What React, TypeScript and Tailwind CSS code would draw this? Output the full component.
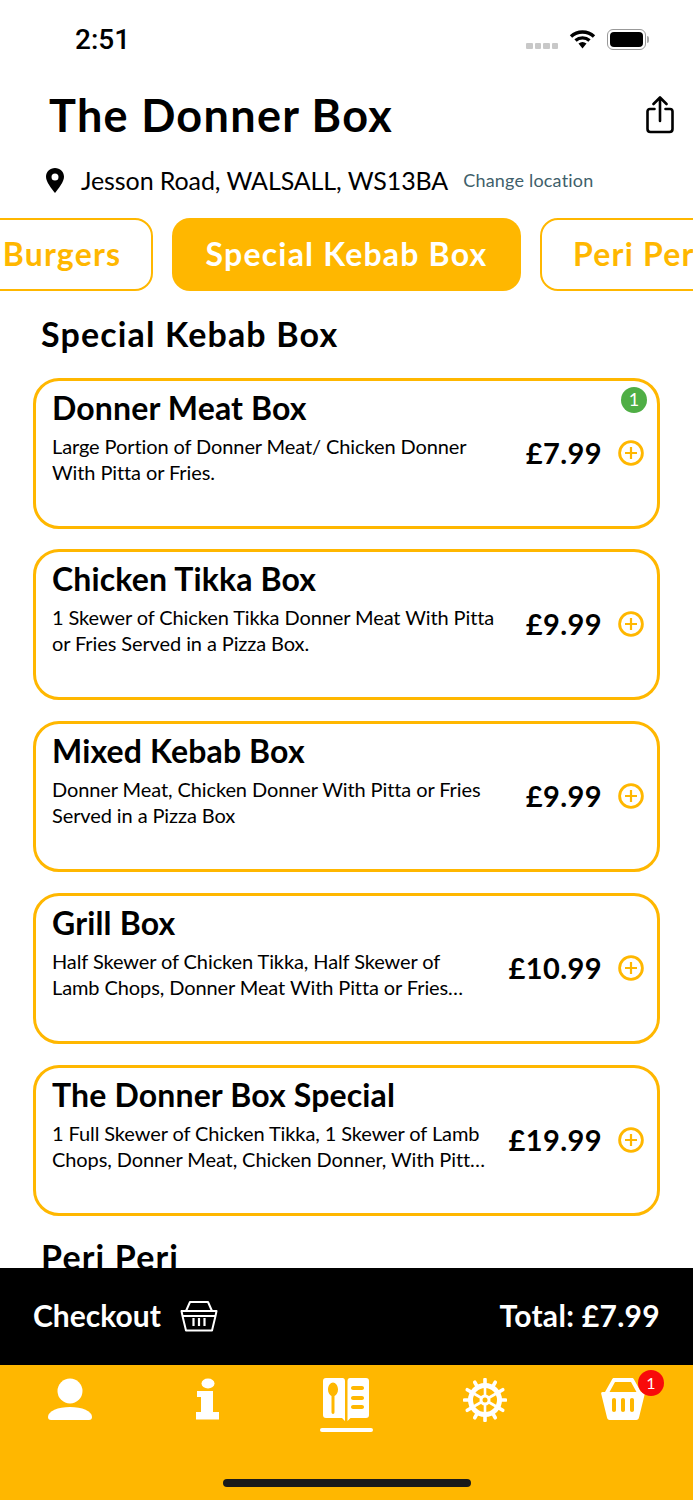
const font = { fontFamily: 'Lato, "Noto Sans", sans-serif' }

const items = [
  { name: 'Donner Meat Box', desc: 'Large Portion of Donner Meat/ Chicken Donner With Pitta or Fries.', price: '£7.99', count: 1 },
  { name: 'Chicken Tikka Box', desc: '1 Skewer of Chicken Tikka Donner Meat With Pitta or Fries Served in a Pizza Box.', price: '£9.99' },
  { name: 'Mixed Kebab Box', desc: 'Donner Meat, Chicken Donner With Pitta or Fries Served in a Pizza Box', price: '£9.99' },
  { name: 'Grill Box', desc: 'Half Skewer of Chicken Tikka, Half Skewer of Lamb Chops, Donner Meat With Pitta or Fries Served in a Pizza Box', price: '£10.99' },
  { name: 'The Donner Box Special', desc: '1 Full Skewer of Chicken Tikka, 1 Skewer of Lamb Chops, Donner Meat, Chicken Donner, With Pitta or Fries Served in a Pizza Box', price: '£19.99' },
]

function PlusIcon() {
  return (
    <svg width="26" height="26" viewBox="0 0 26 26" fill="none" stroke="#ffb700" strokeWidth="2.8">
      <circle cx="13" cy="13" r="11.4" />
      <path d="M13 7v12M7 13h12" strokeWidth="2.2" />
    </svg>
  )
}

function Basket({ outline }: { outline?: boolean }) {
  if (outline) {
    return (
      <svg width="38" height="32" viewBox="0 0 38 32" fill="none" stroke="white" strokeWidth="2" strokeLinejoin="round">
        <path d="M6 11 10 2h18l4 9" />
        <path d="M1.500 11h35l-1 5h-33zM2.500 16l3.500 14.500h26L35.500 16" />
        <path d="M13.500 18v8M19 18v8M24.500 18v8" strokeWidth="2.200" />
      </svg>
    )
  }
  return (
    <svg width="44" height="42" viewBox="0 0 44 42" fill="white">
      <path d="M4 14 11 1.500C11.500.5 12 0 13 0h18c1 0 1.500.5 2 1.500L40 14h-4.500L30 4H14L8.500 14z" />
      <path fillRule="evenodd" d="M1.500 14h41c1 0 1.500.8 1.300 1.800L38 39.500c-.3 1.500-1.200 2.500-2.700 2.500H8.700c-1.500 0-2.400-1-2.700-2.500L.200 15.800C0 14.800.5 14 1.500 14zM13 20c-1.300 0-2 .8-2 2v10c0 1.200.7 2 2 2s2-.8 2-2V22c0-1.200-.7-2-2-2zm9 0c-1.300 0-2 .8-2 2v10c0 1.200.7 2 2 2s2-.8 2-2V22c0-1.200-.7-2-2-2zm9 0c-1.300 0-2 .8-2 2v10c0 1.200.7 2 2 2s2-.8 2-2V22c0-1.200-.7-2-2-2z" />
    </svg>
  )
}

function Gear() {
  const teeth = Array.from({ length: 12 }, (_, i) => i * 30)
  const spokes = [0, 60, 120, 180, 240, 300]
  return (
    <svg width="44" height="44" viewBox="0 0 44 44" fill="none" stroke="white">
      <circle cx="22" cy="22" r="14.500" strokeWidth="5" />
      {teeth.map((a) => (
        <path key={a} d="M22 1.500v5" strokeWidth="3.600" strokeLinecap="round" transform={`rotate(${a} 22 22)`} />
      ))}
      {spokes.map((a) => (
        <path key={a} d="M22 8v14" strokeWidth="2.600" transform={`rotate(${a} 22 22)`} />
      ))}
      <circle cx="22" cy="22" r="5.500" fill="white" stroke="none" />
      <circle cx="22" cy="22" r="2.500" fill="#ffb700" stroke="none" />
    </svg>
  )
}

function MenuBook() {
  return (
    <svg width="46" height="44" viewBox="0 0 46 44" fill="white">
      <path
        fillRule="evenodd"
        d="M3 0h16.500c1.500 0 2.500 1 2.500 3v40l-3-3H3c-2 0-3-1-3-3V3c0-2 1-3 3-3zm7 4.500C7.500 4.500 5 7.500 5 11.500c0 3 1.500 5.500 3.500 6.500v16c0 1.200.5 2 1.500 2s1.500-.8 1.500-2V18c2-1 3.500-3.500 3.500-6.500 0-4-2.500-7-5-7z"
      />
      <path
        fillRule="evenodd"
        d="M24.500 3c0-2 1-3 2.500-3h16c2 0 3 1 3 3v34c0 2-1 3-3 3H27.500l-3 3zM30 8c-1 0-2 .8-2 2s1 2 2 2h9c1 0 2-.8 2-2s-1-2-2-2zm0 10c-1 0-2 .8-2 2s1 2 2 2h9c1 0 2-.8 2-2s-1-2-2-2zm0 9c-1 0-2 .8-2 2s1 2 2 2h9c1 0 2-.8 2-2s-1-2-2-2z"
      />
    </svg>
  )
}

export default function App() {
  return (
    <div className="flex h-[1500px] w-[693px] flex-col overflow-hidden bg-white text-black" style={font}>
      <div className="flex h-[78px] shrink-0 items-center justify-between pl-[75px] pr-[44px]">
        <span className="mt-[2px] text-[28px] font-medium" style={{ fontFamily: 'Roboto, sans-serif' }}>2:51</span>
        <div className="flex items-center gap-[11px]">
          <div className="mt-[13px] flex gap-[2px]">
            <i className="h-[6px] w-[6.500px] rounded-[1px] bg-[#c8c8c8]" />
            <i className="h-[6px] w-[6.500px] rounded-[1px] bg-[#c8c8c8]" />
            <i className="h-[6px] w-[6.500px] rounded-[1px] bg-[#c8c8c8]" />
            <i className="h-[6px] w-[6.500px] rounded-[1px] bg-[#c8c8c8]" />
          </div>
          <svg width="27" height="20" viewBox="0 0 27 20" fill="none" stroke="black" strokeWidth="3.400" className="mt-[-1px]">
            <path d="M2 7.500c6.500-6 16.500-6 23 0M6.500 11.500c4-3.500 10-3.500 14 0" />
            <path d="M9.500 14.500 13.500 19.500 17.500 14.500C15 12.500 12 12.500 9.500 14.500z" fill="black" stroke="none" />
          </svg>
          <div className="flex items-center">
            <div className="h-[21px] w-[39px] rounded-[6px] border border-[#999] p-[2px]">
              <div className="h-full w-full rounded-[4px] bg-black" />
            </div>
            <div className="ml-[1px] h-[7px] w-[2px] rounded-r-sm bg-[#aaa]" />
          </div>
        </div>
      </div>

      <div className="flex items-center justify-between pl-[49px] pr-[19px] pt-[8px]">
        <h1 className="text-[45px] font-bold leading-[58px] tracking-[1.3px]">The Donner Box</h1>
        <svg width="28" height="38" viewBox="0 0 28 38" fill="none" stroke="black" strokeWidth="2.600" strokeLinecap="round" strokeLinejoin="round">
          <path d="M14 25V2M7.500 8 14 1.500 20.500 8" />
          <path d="M8.500 13H4c-1.500 0-2.500 1-2.500 2.500V33c0 2 1 3 3 3h19c2 0 3-1 3-3V15.500c0-1.500-1-2.500-2.500-2.500h-4.500" />
        </svg>
      </div>

      <div className="flex items-center pl-[46px] pt-[18px]">
        <svg width="18" height="25" viewBox="0 0 18 25" fill="black">
          <path fillRule="evenodd" d="M9 0c5 0 9 3.800 9 8.800 0 5-5.500 11.700-9 16.200C5.500 20.500 0 13.800 0 8.800 0 3.800 4 0 9 0zm0 5.500a3.500 3.500 0 1 0 0 7 3.500 3.500 0 0 0 0-7z" />
        </svg>
        <span className="ml-[17px] text-[25px] leading-[36px] tracking-[-0.1px]">Jesson Road, WALSALL, WS13BA</span>
        <span className="ml-[15px] text-[18px] tracking-[0.2px] text-[#3f5f6b]">Change location</span>
      </div>

      <div className="ml-[-29px] mt-[20px] flex shrink-0 gap-[19px] text-[32px] font-bold leading-[40px] tracking-[1.2px]">
        <div className="flex h-[73px] w-[182px] shrink-0 items-center justify-center rounded-[18px] border-2 border-[#ffb700] pb-[2px] text-[#ffb700]">Burgers</div>
        <div className="flex h-[73px] w-[349px] shrink-0 items-center justify-center rounded-[18px] bg-[#ffb700] pb-[2px] text-white">Special Kebab Box</div>
        <div className="flex h-[73px] w-[200px] shrink-0 items-center justify-start whitespace-nowrap rounded-[18px] border-2 border-[#ffb700] pb-[2px] pl-[31px] text-[#ffb700]">Peri Peri</div>
      </div>

      <div className="min-h-0 flex-1 overflow-hidden">
        <h2 className="pl-[41px] pt-[21px] text-[34px] font-bold leading-[44px] tracking-[1.15px]">Special Kebab Box</h2>
        <div className="mt-[21.500px] flex flex-col gap-[20.750px] pl-[33px]">
          {items.map((item) => (
            <div key={item.name} className="relative flex h-[151px] w-[627px] rounded-[26px] border-[3px] border-[#ffb700] pl-[16px] pr-[13px] pt-[6px]">
              <div className="min-w-0 flex-1 pr-[17px]">
                <div className="text-[32px] font-bold leading-[42px] tracking-[0.15px]">{item.name}</div>
                <p className="mt-[4px] line-clamp-2 text-[20px] leading-[26px] tracking-[-0.1px]">{item.desc}</p>
              </div>
              <div className="flex shrink-0 items-start pt-[44px]">
                <span className="text-[29px] font-bold leading-[44px] tracking-[0.4px]">{item.price}</span>
                <span className="ml-[16px] mt-[9px] shrink-0"><PlusIcon /></span>
              </div>
              {item.count && (
                <div className="absolute right-[10px] top-[6px] flex h-[26px] w-[26px] items-center justify-center rounded-full bg-[#4fae45] text-[18px] text-white">{item.count}</div>
              )}
            </div>
          ))}
        </div>
        <h2 className="pl-[41px] pt-[19px] text-[34px] font-bold leading-[44px] tracking-[1.15px]">Peri Peri</h2>
      </div>

      <div className="flex h-[97px] shrink-0 items-center justify-between bg-black pb-[2px] pl-[33px] pr-[33px] text-[30px] font-bold text-white">
        <div className="flex items-center gap-[19px]">
          <span>Checkout</span>
          <Basket outline />
        </div>
        <span className="tracking-[0.3px]">Total: £7.99</span>
      </div>

      <div className="relative h-[135px] shrink-0 bg-[#ffb700]">
        <div className="grid grid-cols-5 pl-[1px] pr-[1px] pt-[13px]">
          <div className="flex justify-center">
            <svg width="46" height="44" viewBox="0 0 46 44" fill="white">
              <circle cx="23" cy="13" r="12.500" />
              <path d="M1 39c0-6 10-10 22-10s22 4 22 10c0 2-1 3-3 3H4c-2 0-3-1-3-3z" />
            </svg>
          </div>
          <div className="flex justify-center">
            <svg width="24" height="42" viewBox="0 0 24 42" fill="white">
              <ellipse cx="12" cy="5.500" rx="6.500" ry="5" />
              <path d="M1 13h16v21h6v7.500H0V34h5V19H1z" />
            </svg>
          </div>
          <div className="flex flex-col items-center">
            <MenuBook />
            <div className="mt-[6px] h-[4px] w-[53px] rounded-full bg-white" />
          </div>
          <div className="flex justify-center"><Gear /></div>
          <div className="flex justify-center">
            <div className="relative">
              <Basket />
              <div className="absolute right-[-19px] top-[-8px] flex h-[26px] w-[26px] items-center justify-center rounded-full bg-[#f80a0a] text-[16px] text-white">1</div>
            </div>
          </div>
        </div>
        <div className="absolute bottom-[13px] left-[223px] h-[8px] w-[248px] rounded-full bg-[#1a1a1a]" />
      </div>
    </div>
  )
}
